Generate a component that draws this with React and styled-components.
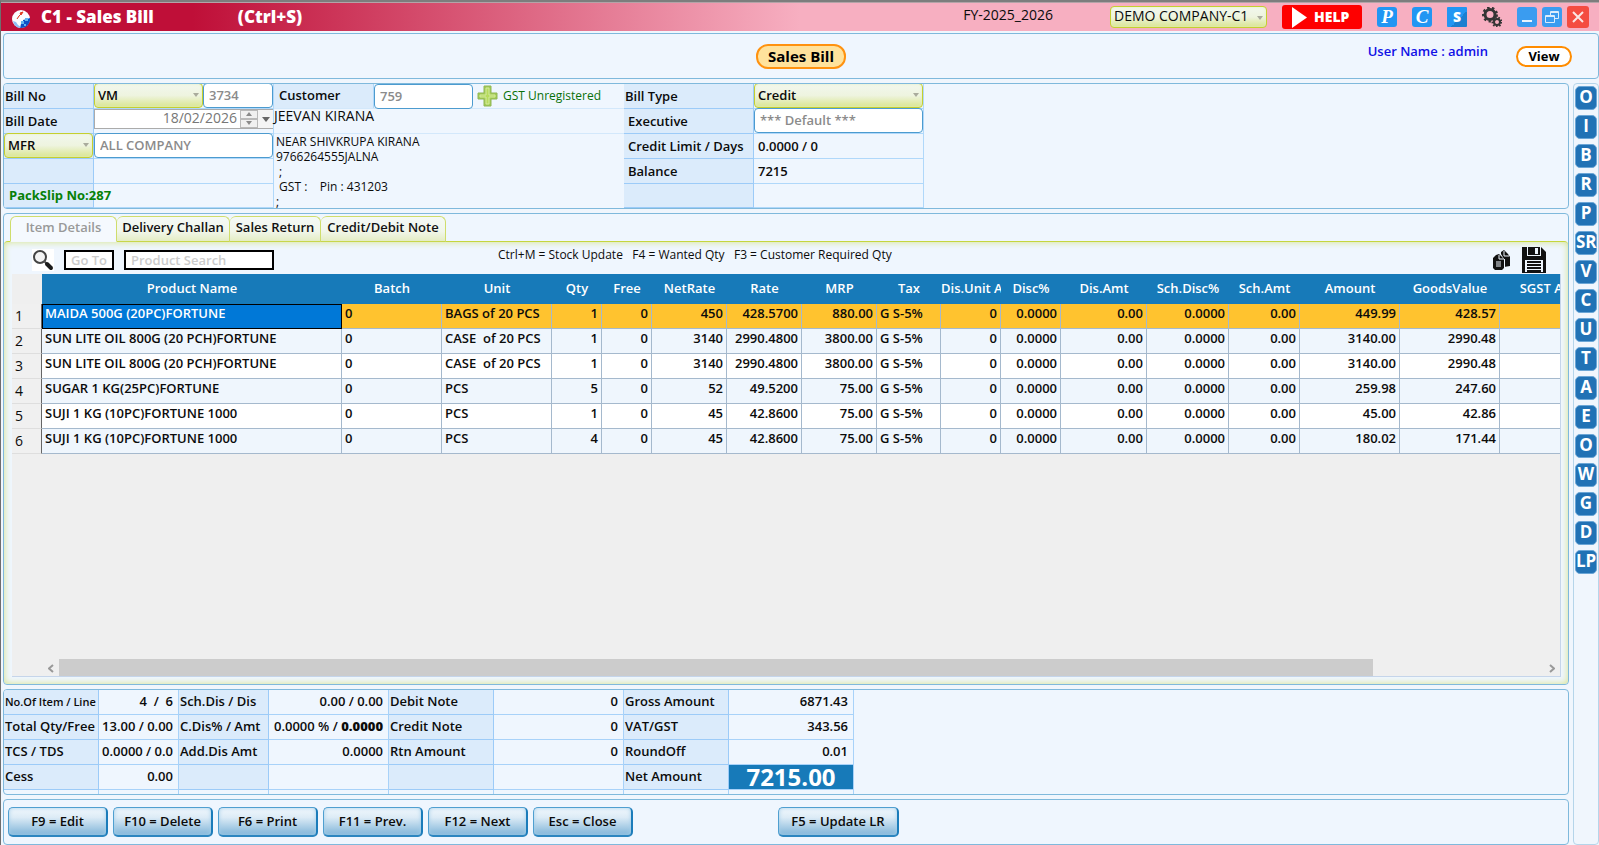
import React, { useState } from 'react';
import styled, { createGlobalStyle, css } from 'styled-components';

const GlobalStyle = createGlobalStyle`
  * { box-sizing: border-box; }
  body {
    margin: 0;
    background: #f0f6fd;
    color: #0b0b0b;
    font: 600 13px/18px "Open Sans", "Noto Sans", sans-serif;
  }
  button, input, select { font: inherit; color: inherit; margin: 0; }
  button { padding: 0; cursor: pointer; }
`

const Page = styled.div`
  display: flex;
  flex-direction: column;
  min-height: 100vh;
  border-top: 2px solid #7d7d7d;
  border-left: 1px solid #6e6e6e;
`

const TitleBar = styled.header`
  display: flex;
  align-items: center;
  height: 29px;
  padding: 0 10px 0 11px;
  border-top: 1px solid #b4a4a8;
  background: linear-gradient(90deg, #bf0f38 0, #bf0f38 12%, #f7afc1 50%);
  font-size: 14px;
  font-weight: 500;
`

const Title = styled.h1`
  margin: 0 0 0 11px;
  color: white;
  font-size: 17px;
  font-weight: 800;
  white-space: pre;
`

const Shortcut = styled.span`
  margin-left: 84px;
  color: white;
  font-size: 17px;
  font-weight: 800;
`

const Year = styled.span`
  margin: 0 57px 4px auto;
`

const ComboBox = styled.span`
  position: relative;
  display: flex;
  flex: ${p => (p.$grow ? '1' : 'none')};
  width: ${p => p.$width || 'auto'};
  height: ${p => p.$height || '25px'};

  select {
    appearance: none;
    width: 100%;
    padding: 0 0 2px 3px;
    border: 1px solid #c5cf2f;
    border-radius: 4px;
    background: linear-gradient(#f2f7ee, #eef4df 50%, #d9e590);
    box-shadow: inset 0 0 3px #e4eec0;
  }
  &::after {
    content: '';
    position: absolute;
    right: 4px;
    top: 10px;
    border: 3px solid transparent;
    border-top: 4px solid #a9ab9c;
    border-bottom: 0;
    pointer-events: none;
  }
`

const HelpButton = styled.button`
  display: flex;
  align-items: center;
  gap: 7px;
  width: 80px;
  height: 24px;
  margin: 0 15px;
  padding-left: 10px;
  border: 0;
  border-radius: 3px;
  background: #fe0000;
  color: white;
  font-size: 14px;
  font-weight: 800;
`

const ShortcutTile = styled.button`
  width: 20px;
  height: 20px;
  margin-right: 15px;
  border: 0;
  border-radius: ${p => (p.$square ? '1px' : '3px')};
  background: ${p => (p.$square ? 'linear-gradient(135deg, #2196f3 60%, #1b7fd0 60%)' : '#2196f3')};
  color: white;
  font: ${p => (p.$square
    ? '800 14px/18px "Open Sans", sans-serif'
    : 'italic 700 19px/18px "Liberation Serif", serif')};
`

const IconButton = styled.button`
  display: flex;
  border: 0;
  background: ${p => p.$bg || 'none'};
`

const WindowButton = styled.button`
  display: flex;
  align-items: center;
  justify-content: center;
  width: ${p => (p.$close ? '22px' : '20px')};
  height: ${p => (p.$close ? '22px' : '20px')};
  margin-left: ${p => (p.$first ? '15px' : '5px')};
  border: 0;
  border-radius: 3px;
  background: ${p => (p.$close ? '#f44c40' : '#3a9cf0')};
`

const panel = css`
  border: 1px solid #7fb9dc;
  border-radius: 4px;
  background: #eff6fe;
`

const TopPanel = styled.section`
  ${panel}
  display: grid;
  grid-template-columns: 1fr auto 1fr;
  align-items: center;
  height: 46px;
  margin: 2px 0 4px 2px;
`

const PageName = styled.h2`
  grid-column: 2;
  margin: 0;
  padding: 0 10px 1px;
  border: 2px solid #ff9210;
  border-radius: 12px;
  background: #ffe29c;
  color: black;
  font-size: 15px;
  line-height: 20px;
  font-weight: 700;
`

const UserArea = styled.div`
  display: flex;
  align-items: center;
  justify-content: flex-end;
  padding-right: 26px;
  color: #1010e6;
`

const UserName = styled.span`
  margin: 0 28px 10px 0;
`

const ViewButton = styled.button`
  width: 56px;
  height: 21px;
  border: 2px solid #ff8c00;
  border-radius: 11px;
  background: white;
  color: black;
  font-weight: 700;
  line-height: 15px;
`

const Workspace = styled.div`
  display: flex;
  flex: 1;
  gap: 4px;
  padding-left: 2px;
`

const Main = styled.main`
  display: flex;
  flex-direction: column;
  flex: 1;
  gap: 4px;
  min-width: 0;
`

const SideBar = styled.nav`
  display: flex;
  flex-direction: column;
  gap: 5px;
  width: 26px;
  padding: 2px 1px;
  border: 1px solid #b5d5ea;
  border-radius: 4px;
`

const SideButton = styled.button`
  height: 24px;
  padding-bottom: 2px;
  border: 1px solid #6ba6d6;
  border-radius: 5px;
  background: #2172b5;
  color: white;
  font-size: 17px;
  font-weight: 700;
  line-height: 20px;
`

const BillHeader = styled.section`
  ${panel}
  display: flex;
  overflow: hidden;
`

const FieldGrid = styled.div`
  display: grid;
  flex: none;
  grid-template-columns: ${p => p.$columns};
  grid-template-rows: repeat(4, 25px) 24px;
`

const Cell = styled.div`
  display: flex;
  align-items: center;
  min-width: 0;
  padding: 0 0 1px ${p => p.$indent || '0'};
  border-right: 1px solid ${p => (p.$label ? '#9ccbf8' : '#b0d8fa')};
  border-bottom: 1px solid ${p => (p.$label ? '#9ccbf8' : '#b0d8fa')};
  background: ${p => (p.$label ? '#dbebfb' : 'none')};
  white-space: nowrap;
`

const PackSlip = styled.strong`
  color: #078007;
  font-weight: 700;
`

const TextBox = styled.input`
  flex: ${p => (p.$width ? 'none' : '1')};
  width: ${p => p.$width || '0'};
  height: 25px;
  padding: 0 5px 1px;
  border: 1px solid #4c9bcf;
  border-radius: 4px;
  background: white;
  color: #8b8b8b;
`

const DateBox = styled.div`
  display: flex;
  flex: 1;
  height: 20px;
  margin-bottom: 4px;
  border: 1px solid #ababab;
  border-right: 0;
  background: white;

  input {
    width: 145px;
    padding: 0 3px 2px;
    border: 0;
    background: none;
    color: #777;
    font-size: 14px;
    font-weight: 500;
    text-align: right;
  }
`

const Spinner = styled.span`
  display: grid;
  grid-template-rows: 9px 9px;
  width: 18px;

  button {
    display: flex;
    align-items: center;
    justify-content: center;
    border: 1px solid #b9b9b9;
    background: #f0f0f0;
  }
`

const DropButton = styled.button`
  display: flex;
  flex: 1;
  align-items: center;
  justify-content: center;
  border: 0;
  background: #f4f4f4;
`

const CustomerInfo = styled.div`
  flex: none;
  width: 350px;
`

const CustomerRow = styled.div`
  display: flex;
  align-items: center;
  height: 25px;
  border-bottom: 1px solid #d3e8fb;
`

const CustomerLabel = styled.label`
  width: 100px;
  height: 24px;
  padding: 2px 0 0 5px;
  border-right: 1px solid #b0d8fa;
  background: #dbebfb;
`

const AddButton = styled(IconButton)`
  margin: 0 5px 0 4px;
`

const GstState = styled.span`
  color: #087008;
  font-size: 12px;
  font-weight: 500;
`

const CustomerName = styled.div`
  height: 25px;
  border-bottom: 1px solid #d3e8fb;
  line-height: 14px;
  font-size: 14px;
  font-weight: 500;
`

const Address = styled.address`
  height: 74px;
  padding: 0 2px;
  font-size: 12px;
  font-weight: 500;
  line-height: 15px;
  font-style: normal;
  white-space: pre;
`

const Details = styled.section`
  ${panel}
  display: flex;
  flex: 1;
  flex-direction: column;
  padding-top: 2px;
`

const TabList = styled.div`
  display: flex;
  padding-left: 6px;
  margin-bottom: -1px;
`

const Tab = styled.button`
  height: 26px;
  width: ${p => p.$width};
  padding: 0 0 4px;
  border: 1px solid #cfdd6c;
  border-left-width: ${p => (p.$active ? '1px' : '0')};
  border-bottom-color: ${p => (p.$active ? '#f3f8fd' : '#c8d64a')};
  border-radius: 6px 6px 0 0;
  background: ${p => (p.$active ? '#f5f9fe' : 'linear-gradient(#f4f9f6, #f1f6ea 60%, #e4edc4)')};
  color: ${p => (p.$active ? '#999' : '#111')};
  white-space: nowrap;
  z-index: 1;
`

const TabPane = styled.div`
  display: flex;
  flex: 1;
  flex-direction: column;
  min-width: 0;
  padding: 0 7px 7px 8px;
  border-top: 1px solid #c5d63c;
  border-radius: 4px;
  box-shadow: inset 0 0 7px #d5e388;
`

const ToolRow = styled.div`
  display: flex;
  align-items: center;
  height: 32px;
  padding: 4px 15px 0 20px;
  font-size: 12px;
  font-weight: 500;
`

const SearchBox = styled.input`
  width: ${p => p.$width};
  height: 20px;
  margin-left: 10px;
  padding: 0 5px 1px;
  border: 2px solid black;
  background: white;
  font-size: 13px;
  font-weight: 600;
  &::placeholder { color: #ccc; opacity: 1; }
`

const Hint = styled.span`
  margin: 0 auto 11px 224px;
  white-space: pre;
`

const Tools = styled.div`
  display: flex;
  align-items: center;
  gap: 11px;
`

const GridFrame = styled.div`
  display: flex;
  flex: 1;
  flex-direction: column;
  overflow: hidden;
  border: solid #c5d5ea;
  border-width: 0 1px 1px 0;
  background: #efefef;
`

const ItemTable = styled.table`
  table-layout: fixed;
  width: 1588px;
  border-spacing: 0;

  td, th {
    overflow: hidden;
    white-space: pre;
  }
  thead th {
    height: 30px;
    padding: 0 0 2px;
    background: #177ab9;
    color: white;
    font-weight: 600;
  }
  thead td { background: #efefef; }
  tbody th {
    height: 25px;
    padding: 0 0 0 3px;
    border-right: 1px solid #666;
    border-bottom: 1px solid #dedede;
    background: #f0f0f0;
    font-size: 14px;
    font-weight: 400;
    line-height: 16px;
    text-align: left;
  }
`

const Row = styled.tr`
  background: ${p => (p.$current ? '#ffc32f' : '#eff6fd')};
  &:nth-child(odd) { background: ${p => (p.$current ? '#ffc32f' : 'white')}; }
`

const ItemCell = styled.td`
  height: 25px;
  padding: 0 3px 7px;
  border-right: 1px solid #a5b9cd;
  border-bottom: 1px solid #a5b9cd;
  line-height: 16px;
  text-align: ${p => (p.$right ? 'right' : 'left')};
  ${p => p.$selected && css`
    padding: 0 2px 7px;
    border: 1px solid black;
    background: #0078d7;
    color: white;
    line-height: 15px;
  `}
`

const ScrollBar = styled.div`
  display: flex;
  align-items: center;
  height: 17px;
  margin-top: auto;
  padding-left: 30px;

  button {
    width: 17px;
    border: 0;
    background: none;
  }
`

const Track = styled.div`
  display: grid;
  grid-template-columns: 31fr 4fr;
  flex: 1;
`

const Thumb = styled.div`
  height: 17px;
  background: #cccccc;
`

const Totals = styled.section`
  ${panel}
  overflow: hidden;
`

const TotalsTable = styled.table`
  table-layout: fixed;
  width: 850px;
  border-spacing: 0;

  th, td {
    height: 25px;
    padding: 0 5px 2px 0;
    border-right: 1px solid #a8d2f9;
    border-bottom: 1px solid #a8d2f9;
    font-weight: 600;
    text-align: right;
    white-space: pre;
  }
  th {
    padding: 0 0 2px 1px;
    border-color: #9ccbf8;
    background: #dbebfb;
    text-align: left;
  }
  tfoot td {
    height: 4px;
    padding: 0;
    border-bottom: 0;
  }
`

const SmallLabel = styled.span`
  font-size: 11px;
`

const NetAmount = styled.td`
  && {
    padding: 0;
    background: #177ab9;
    color: white;
    font-size: 24px;
    font-weight: 700;
    line-height: 22px;
    text-align: center;
  }
`

const ActionBar = styled.footer`
  ${panel}
  display: flex;
  align-items: center;
  gap: 5px;
  height: 46px;
  padding: 0 4px;
`

const ActionButton = styled.button`
  width: ${p => (p.$wide ? '121px' : '100px')};
  height: 30px;
  margin-left: ${p => (p.$wide ? '140px' : '0')};
  padding-bottom: 2px;
  border: 1px solid #4f9fd0;
  border-right: 2px solid #1b7cba;
  border-bottom: 2px solid #2c86c0;
  border-radius: 5px;
  background: linear-gradient(#f2f8fd, #dcebf6 35%, #7fb4d8);
  box-shadow: inset 0 0 4px #a5cfe9;
`

const columns = [
  ['Product Name', 300],
  ['Batch', 100],
  ['Unit', 110],
  ['Qty', 50, true],
  ['Free', 50, true],
  ['NetRate', 75, true],
  ['Rate', 75, true],
  ['MRP', 75, true],
  ['Tax', 64],
  ['Dis.Unit Amt', 60, true],
  ['Disc%', 60, true],
  ['Dis.Amt', 86, true],
  ['Sch.Disc%', 82, true],
  ['Sch.Amt', 71, true],
  ['Amount', 100, true],
  ['GoodsValue', 100, true],
  ['SGST Amt', 100, true],
]

const items = [
  ['MAIDA 500G (20PC)FORTUNE', 'BAGS of 20 PCS', '1', '450', '428.5700', '880.00', '449.99', '428.57'],
  ['SUN LITE OIL 800G (20 PCH)FORTUNE', 'CASE  of 20 PCS', '1', '3140', '2990.4800', '3800.00', '3140.00', '2990.48'],
  ['SUN LITE OIL 800G (20 PCH)FORTUNE', 'CASE  of 20 PCS', '1', '3140', '2990.4800', '3800.00', '3140.00', '2990.48'],
  ['SUGAR 1 KG(25PC)FORTUNE', 'PCS', '5', '52', '49.5200', '75.00', '259.98', '247.60'],
  ['SUJI 1 KG (10PC)FORTUNE 1000', 'PCS', '1', '45', '42.8600', '75.00', '45.00', '42.86'],
  ['SUJI 1 KG (10PC)FORTUNE 1000', 'PCS', '4', '45', '42.8600', '75.00', '180.02', '171.44'],
]

const toCells = ([name, unit, qty, net, rate, mrp, amount, goods]) => [
  name, '0', unit, qty, '0', net, rate, mrp, 'G S-5%', '0',
  '0.0000', '0.00', '0.0000', '0.00', amount, goods, '',
]

const tabs = [
  ['Item Details', '107px'],
  ['Delivery Challan', '113px'],
  ['Sales Return', '91px'],
  ['Credit/Debit Note', '125px'],
]

const sideKeys = ['O', 'I', 'B', 'R', 'P', 'SR', 'V', 'C', 'U', 'T', 'A', 'E', 'O', 'W', 'G', 'D', 'LP']

const actions = ['F9 = Edit', 'F10 = Delete', 'F6 = Print', 'F11 = Prev.', 'F12 = Next', 'Esc = Close']

const Combo = ({ label, value, id, ...rest }) => (
  <ComboBox {...rest}>
    <select id={id} aria-label={label} defaultValue={value}>
      <option>{value}</option>
    </select>
  </ComboBox>
)

const Logo = () => (
  <svg width="18" height="24" viewBox="0 -5 18 24">
    <circle cx="9" cy="9" r="9" fill="#fbfcff" />
    <path d="M18 8A9 9 0 0 1 8 18L9 14l2 0 0-4 4-1z" fill="#0d50c8" />
    <path d="M9 11h3v3H9zM13 8h3v3h-3zM12 14h2v2h-2z" fill="#5fb4f2" />
    <path d="M1 11l3 1 2 3 3 2-2 1A9 9 0 0 1 1 11z" fill="#8fbdf3" />
    <path d="M5 9l2-3 2-2M8 3l3-1-2 3z" stroke="#e03a20" fill="#e03a20" />
  </svg>
)

const Gear = ({ cx, cy, r, hole }) => (
  <g fill="none" stroke="#353535">
    <circle cx={cx} cy={cy} r={(r + hole) / 2} strokeWidth={r - hole} />
    <circle cx={cx} cy={cy} r={r} strokeWidth="3" strokeDasharray={`${(r * Math.PI) / 9}`} />
  </g>
)

const Gears = () => (
  <svg width="20" height="20" viewBox="0 0 20 20">
    <Gear cx={8} cy={7.5} r={6.500} hole={3.500} />
    <Gear cx={15} cy={15} r={4} hole={2} />
  </svg>
)

const Plus = () => (
  <svg width="21" height="22" viewBox="0 0 21 22">
    <path d="M7 1h7v7h6v6h-6v7H7v-7H1V8h6z" fill="#a4cc52" stroke="#8fb656" strokeLinejoin="round" />
    <path d="M9 3h3v7h6v2h-6v7H9v-7H3v-2h6z" fill="#b6db5c" stroke="#d3e9a0" />
  </svg>
)

const Magnifier = () => (
  <svg width="22" height="22" viewBox="0 0 22 22">
    <circle cx="8" cy="8" r="6" fill="#f4f4f4" stroke="#444" strokeWidth="2" />
    <path d="M12 12l3 3" stroke="#555" strokeWidth="2" />
    <path d="M15 15l4 4" stroke="#1b1b1b" strokeWidth="4" strokeLinecap="round" />
  </svg>
)

const CopyIcon = () => (
  <svg width="18" height="20" viewBox="0 0 18 20">
    <path d="M8 4V2l3-2 4 4 2 3v9l-6 1V9z" fill="#111" />
    <path d="M0 8l3-3 3-1 5 5v9l-2 2H2l-2-2z" fill="#111" />
    <path d="M6 5v4h5M11 1v5h5M3 12h5M3 14h5M3 16h5M11.500 9v9" stroke="#eff6fe" fill="none" />
  </svg>
)

const SaveIcon = () => (
  <svg width="24" height="26" viewBox="0 0 24 26">
    <path d="M0 0h19l5 5v21H0z" fill="#111" />
    <path d="M5 0h14v9H5z" fill="#eff6fe" />
    <path d="M6 0h12v8H6z" fill="#111" />
    <path d="M13 1h3v6h-3z" fill="#eff6fe" />
    <path d="M3 13h18v12H3z" fill="#eff6fe" />
    <path d="M5 15h14M5 18h14M5 21h14M5 24h14" stroke="#111" strokeWidth="2" />
  </svg>
)

const Arrow = ({ d, color = '#8a8a8a' }) => (
  <svg width="8" height="6" viewBox="0 0 8 6"><path d={d} fill={color} /></svg>
)

const Chevron = ({ d }) => (
  <svg width="6" height="9" viewBox="0 0 6 9">
    <path d={d} fill="none" stroke="#999" strokeWidth="2" />
  </svg>
)

const AppBar = () => (
  <TitleBar>
    <Logo />
    <Title>C1 - Sales Bill</Title>
    <Shortcut>(Ctrl+S)</Shortcut>
    <Year>FY-2025_2026</Year>
    <Combo label="Company" value="DEMO COMPANY-C1" $width="157px" $height="22px" />
    <HelpButton>
      <svg width="15" height="21" viewBox="0 0 15 21"><path d="M0 0l15 10.500L0 21z" fill="white" /></svg>
      HELP
    </HelpButton>
    <ShortcutTile>P</ShortcutTile>
    <ShortcutTile>C</ShortcutTile>
    <ShortcutTile $square>S</ShortcutTile>
    <IconButton aria-label="Settings"><Gears /></IconButton>
    <WindowButton $first aria-label="Minimize">
      <svg width="12" height="12"><path d="M1 10h10" stroke="#e8f3fd" strokeWidth="2" /></svg>
    </WindowButton>
    <WindowButton aria-label="Restore">
      <svg width="14" height="14" fill="none" stroke="#d9ecfc">
        <path d="M5.500 5V1.500h8v7H10M5 2.500h8" />
        <path d="M.5 5.500h9v7h-9zM1 6.500h8" />
      </svg>
    </WindowButton>
    <WindowButton $close aria-label="Close">
      <svg width="12" height="12"><path d="M1 1l10 10M11 1L1 11" stroke="#fbe5e3" strokeWidth="2" /></svg>
    </WindowButton>
  </TitleBar>
)

const BillForm = () => (
  <BillHeader>
    <FieldGrid $columns="90px 180px">
      <Cell $label $indent="1px"><label htmlFor="billNo">Bill No</label></Cell>
      <Cell>
        <Combo label="Bill series" value="VM" $grow />
        <TextBox id="billNo" $width="70px" defaultValue="3734" />
      </Cell>
      <Cell $label $indent="1px"><label htmlFor="billDate">Bill Date</label></Cell>
      <Cell>
        <DateBox>
          <input id="billDate" defaultValue="18/02/2026" />
          <Spinner>
            <button aria-label="Next day"><Arrow d="M1 5l3-4 3 4z" /></button>
            <button aria-label="Previous day"><Arrow d="M1 1l3 4 3-4z" /></button>
          </Spinner>
          <DropButton aria-label="Open calendar"><Arrow d="M0 1l4 5 4-5z" color="#666" /></DropButton>
        </DateBox>
      </Cell>
      <Cell $label><Combo label="Filter by" value="MFR" $grow /></Cell>
      <Cell><TextBox aria-label="Company filter" defaultValue="ALL COMPANY" /></Cell>
      <Cell $label />
      <Cell />
      <Cell $label $indent="5px"><PackSlip>PackSlip No:287</PackSlip></Cell>
      <Cell />
    </FieldGrid>

    <CustomerInfo>
      <CustomerRow>
        <CustomerLabel htmlFor="customer">Customer</CustomerLabel>
        <TextBox id="customer" $width="99px" defaultValue="759" />
        <AddButton aria-label="Add customer"><Plus /></AddButton>
        <GstState>GST Unregistered</GstState>
      </CustomerRow>
      <CustomerName>JEEVAN KIRANA</CustomerName>
      <Address>{'NEAR SHIVKRUPA KIRANA\n9766264555JALNA\n ;\n GST :    Pin : 431203\n;'}</Address>
    </CustomerInfo>

    <FieldGrid $columns="130px 170px">
      <Cell $label $indent="1px"><label htmlFor="billType">Bill Type</label></Cell>
      <Cell><Combo id="billType" value="Credit" $grow /></Cell>
      <Cell $label $indent="4px"><label htmlFor="executive">Executive</label></Cell>
      <Cell><TextBox id="executive" defaultValue="*** Default ***" /></Cell>
      <Cell $label $indent="4px">Credit Limit / Days</Cell>
      <Cell $indent="4px">0.0000 / 0</Cell>
      <Cell $label $indent="4px">Balance</Cell>
      <Cell $indent="4px">7215</Cell>
      <Cell $label />
      <Cell />
    </FieldGrid>
  </BillHeader>
)

const ItemGrid = () => (
  <GridFrame>
    <ItemTable>
      <colgroup>
        <col width="30" />
        {columns.map(([name, width]) => <col key={name} width={width} />)}
      </colgroup>
      <thead>
        <tr>
          <td />
          {columns.map(([name]) => <th key={name} scope="col">{name}</th>)}
        </tr>
      </thead>
      <tbody>
        {items.map((item, row) => (
          <Row key={row} $current={row === 0}>
            <th scope="row">{row + 1}</th>
            {toCells(item).map((text, i) => (
              <ItemCell key={i} $right={columns[i][2]} $selected={row === 0 && i === 0}>{text}</ItemCell>
            ))}
          </Row>
        ))}
      </tbody>
    </ItemTable>
    <ScrollBar>
      <button aria-label="Scroll left"><Chevron d="M5 1L1 4.500 5 8" /></button>
      <Track><Thumb /></Track>
      <button aria-label="Scroll right"><Chevron d="M1 1l4 3.500L1 8" /></button>
    </ScrollBar>
  </GridFrame>
)

const BillTotals = () => (
  <Totals>
    <TotalsTable>
      <colgroup>
        {[95, 80, 90, 120, 105, 130, 105, 125].map((width, i) => <col key={i} width={width} />)}
      </colgroup>
      <tbody>
        <tr>
          <th><SmallLabel>No.Of Item / Line</SmallLabel></th><td>4  /  6</td>
          <th>Sch.Dis / Dis</th><td>0.00 / 0.00</td>
          <th>Debit Note</th><td>0</td>
          <th>Gross Amount</th><td>6871.43</td>
        </tr>
        <tr>
          <th>Total Qty/Free</th><td>13.00 / 0.00</td>
          <th>C.Dis% / Amt</th><td>0.0000 % / <b>0.0000</b></td>
          <th>Credit Note</th><td>0</td>
          <th>VAT/GST</th><td>343.56</td>
        </tr>
        <tr>
          <th>TCS / TDS</th><td>0.0000 / 0.0</td>
          <th>Add.Dis Amt</th><td>0.0000</td>
          <th>Rtn Amount</th><td>0</td>
          <th>RoundOff</th><td>0.01</td>
        </tr>
        <tr>
          <th>Cess</th><td>0.00</td>
          <th /><td />
          <th /><td />
          <th>Net Amount</th><NetAmount>7215.00</NetAmount>
        </tr>
      </tbody>
      <tfoot>
        <tr><td /><td /><td /><td /><td /><td /><td /><td /></tr>
      </tfoot>
    </TotalsTable>
  </Totals>
)

export default function App() {
  const [active, setActive] = useState('Item Details')

  return (
    <Page>
      <GlobalStyle />
      <AppBar />
      <TopPanel>
        <PageName>Sales Bill</PageName>
        <UserArea>
          <UserName>User Name : admin</UserName>
          <ViewButton>View</ViewButton>
        </UserArea>
      </TopPanel>
      <Workspace>
        <Main>
          <BillForm />
          <Details>
            <TabList role="tablist">
              {tabs.map(([name, width]) => (
                <Tab
                  key={name}
                  role="tab"
                  aria-selected={active === name}
                  $active={active === name}
                  $width={width}
                  onClick={() => setActive(name)}
                >
                  {name}
                </Tab>
              ))}
            </TabList>
            <TabPane>
              <ToolRow>
                <IconButton $bg="white" aria-label="Search"><Magnifier /></IconButton>
                <SearchBox $width="50px" placeholder="Go To" aria-label="Go To" />
                <SearchBox $width="150px" placeholder="Product Search" aria-label="Product Search" />
                <Hint>{'Ctrl+M = Stock Update   F4 = Wanted Qty   F3 = Customer Required Qty'}</Hint>
                <Tools>
                  <IconButton aria-label="Copy"><CopyIcon /></IconButton>
                  <IconButton aria-label="Save"><SaveIcon /></IconButton>
                </Tools>
              </ToolRow>
              <ItemGrid />
            </TabPane>
          </Details>
          <BillTotals />
          <ActionBar>
            {actions.map(name => <ActionButton key={name}>{name}</ActionButton>)}
            <ActionButton $wide>F5 = Update LR</ActionButton>
          </ActionBar>
        </Main>
        <SideBar>
          {sideKeys.map((name, i) => <SideButton key={i}>{name}</SideButton>)}
        </SideBar>
      </Workspace>
    </Page>
  )
}
